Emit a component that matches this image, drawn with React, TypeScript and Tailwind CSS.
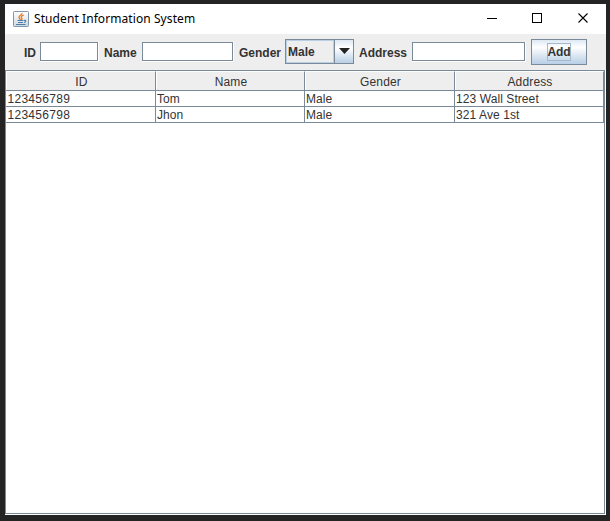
import React from 'react';

const students = [
  ['123456789', 'Tom', 'Male', '123 Wall Street'],
  ['123456798', 'Jhon', 'Male', '321 Ave 1st'],
];
const columns = ['ID', 'Name', 'Gender', 'Address'];
const grid = 'grid grid-cols-[150px_149px_150px_149px]';

function JavaIcon() {
  return (
    <svg width="16" height="16" viewBox="0 0 16 16">
      <defs>
        <linearGradient id="tile" x1="0" y1="0" x2="0" y2="1">
          <stop offset="0" stopColor="#ffffff" />
          <stop offset="1" stopColor="#cdd8e2" />
        </linearGradient>
      </defs>
      <rect x="0.5" y="0.5" width="15" height="15" rx="0.8" fill="url(#tile)" stroke="#8296ac" />
      <path d="M9 2C9.500 4 5.800 4.500 6 6.300C6.200 7.500 7.300 7.700 7.300 9M10.800 4C8.300 5 7.800 5.800 8.600 6.800C9.300 7.700 9 8.400 8.300 9" fill="none" stroke="#ea7a1c" strokeWidth="1.3" />
      <path d="M4.500 9.500H10.500M5 11.500H10M3 13.500H12.500M11 9.500C13.500 8.900 13.500 11 11 11.500" fill="none" stroke="#527da6" strokeWidth="1.1" />
    </svg>
  );
}

function Field({ className }: { className: string }) {
  return (
    <div className={`h-[20px] border-r border-b border-white ${className}`}>
      <input className="block h-[19px] w-full border border-[#7a8a99] bg-white outline-none" />
    </div>
  );
}

export default function App() {
  return (
    <div className="h-[521px] w-[610px] bg-[#242424] pt-[4px] pl-[5px] font-['Liberation_Sans',Arial,sans-serif] text-[12px] leading-[15px] text-[#333333]">
      <main className="flex h-[511px] w-[601px] flex-col bg-white">
        <header className="flex h-[30px] shrink-0 items-center pl-[8px] text-black">
          <JavaIcon />
          <h1 className="ml-[5px] w-[170px] pb-px whitespace-nowrap font-['Noto_Sans',sans-serif] text-[12px] tracking-[0.08px]">Student Information System</h1>
          <svg className="ml-auto" width="130" height="30" viewBox="0 0 130 30" fill="none" stroke="#000">
            <path d="M11 14.500H21M56.500 9.500H65.500V18.500H56.500Z" shapeRendering="crispEdges" />
            <path d="M102.500 9.500L111.500 18.500M111.500 9.500L102.500 18.500" strokeWidth="1.1" />
          </svg>
        </header>

        <form className="flex h-[36px] shrink-0 bg-[#eeeeee] pt-[5px] pl-[19px] font-bold">
          <label className="w-[16px] pt-[7px]">ID</label>
          <Field className="mt-[3px] w-[59px]" />
          <label className="w-[43px] pt-[7px] pl-[5px]">Name</label>
          <Field className="mt-[3px] w-[92px]" />
          <label className="w-[51px] pt-[7px] pl-[5px]">Gender</label>
          <div className="flex h-[25px] w-[69px] border border-[#7a8a99]">
            <span className="w-[48px] border border-[#b8cfe5] pt-[4px] pl-px">Male</span>
            <span className="flex flex-1 items-center justify-center border-l border-[#7a8a99] bg-linear-to-b from-[#dde8f3] via-white via-35% to-[#b8cfe5]">
              <svg className="mb-px" width="11" height="6" viewBox="0 0 11 6"><path d="M0 0H11L5.500 6Z" fill="#222" /></svg>
            </span>
          </div>
          <label className="w-[58px] pt-[7px] pl-[5px]">Address</label>
          <Field className="mt-[3px] w-[114px]" />
          <button type="button" className="ml-[5px] flex h-[26px] w-[56px] items-center justify-center border border-[#7a8a99] bg-linear-to-b from-[#dde8f3] via-white via-30% to-[#b8cfe5]">
            <span className="flex h-[18px] w-[24px] justify-center border border-[#a3b8cc] pt-px tracking-[-0.15px]">Add</span>
          </button>
        </form>

        <section className="h-[444px] w-[600px] shrink-0 border border-[#7a8a99]">
          <div className={`${grid} h-[20px] border-b border-[#7a8a99] bg-[#eeeeee]`}>
            {columns.map((name) => (
              <div key={name} className="border-t border-r border-l border-t-white border-r-[#7a8a99] border-l-white pt-[3px] pl-px text-center tracking-[0.15px]">{name}</div>
            ))}
          </div>
          {students.map((student) => (
            <div key={student[0]} className={`${grid} h-[16px] border-b border-[#7a8a99]`}>
              {student.map((value, i) => (
                <div key={i} className={`h-[15px] border-r border-[#7a8a99] pt-px whitespace-nowrap ${i === 0 ? 'pl-[1.5px] tracking-[0.28px]' : 'pl-px tracking-[0.08px]'}`}>{value}</div>
              ))}
            </div>
          ))}
        </section>
      </main>
    </div>
  );
}
